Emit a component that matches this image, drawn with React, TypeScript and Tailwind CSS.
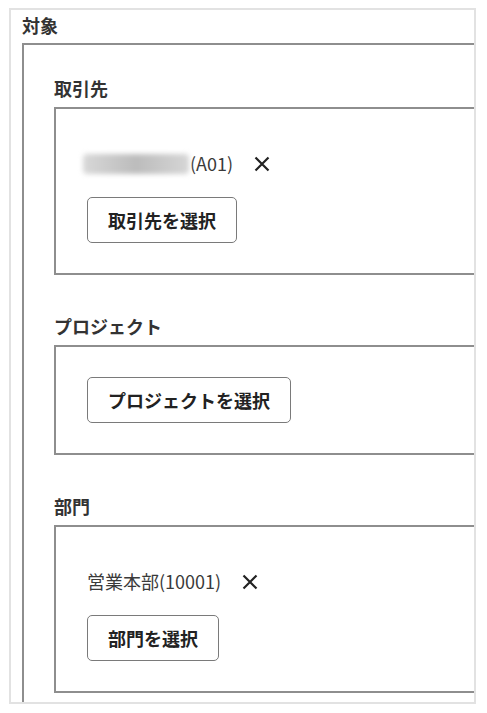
import React from "react";

const XIcon = () => (
  <svg width="16" height="16" viewBox="0 0 16 16" className="ml-[21px] shrink-0">
    <path d="M1.5 1.5 L14.5 14.5 M14.5 1.5 L1.5 14.5" stroke="#222" strokeWidth="2.2" strokeLinecap="butt" />
  </svg>
);

const Btn = ({ children }: { children: React.ReactNode }) => (
  <button className="h-[46px] px-5 border border-[#7a7a7a] rounded-[5px] bg-white text-[18px] font-bold text-[#222] leading-[27px]">
    {children}
  </button>
);

const Section = ({
  label,
  selected,
  btn,
  className = "",
}: {
  label: string;
  selected?: React.ReactNode;
  btn: string;
  className?: string;
}) => (
  <div className={className}>
    <div className="h-[27px] leading-[27px] text-[18px] font-bold text-[#333] mb-[5px]">{label}</div>
    <div className="w-[440px] border-2 border-[#8e8e8e] pl-[31px] pt-[30px] pb-[30px]">
      {selected && (
        <div className="flex items-center h-[27px] mt-[11px] mb-[20px] text-[18px] leading-[27px] text-[#3a3a3a]">
          {selected}
          <XIcon />
        </div>
      )}
      <Btn>{btn}</Btn>
    </div>
  </div>
);

export default function App() {
  return (
    <div className="bg-white w-[487px] h-[713px] pt-2 pl-[9px]" style={{ fontFamily: '"Noto Sans CJK JP", "Noto Sans", sans-serif' }}>
      <div className="w-[467px] h-[696px] border-2 border-[#e2e2e2] overflow-hidden pt-[2px]">
        <div className="ml-[11px] h-[27px] leading-[27px] text-[18px] font-bold text-[#333]">対象</div>
        <div className="ml-[11px] mt-[4px] w-[480px] border-2 border-[#8e8e8e] pl-[30px] pt-[30px] pb-[60px]">
          <Section
            label="取引先"
            selected={
              <>
                <span className="inline-block w-[106px] h-[20px] -ml-[4px] mr-[1px] rounded-sm blur-[2.5px] bg-gradient-to-r from-[#d8d8d8] via-[#bcbcbc] to-[#d6d6d6]" />
                <span>(A01)</span>
              </>
            }
            btn="取引先を選択"
          />
          <Section label="プロジェクト" btn="プロジェクトを選択" className="mt-[38px]" />
          <Section label="部門" selected={<span>営業本部(10001)</span>} btn="部門を選択" className="mt-[38px]" />
        </div>
      </div>
    </div>
  );
}
